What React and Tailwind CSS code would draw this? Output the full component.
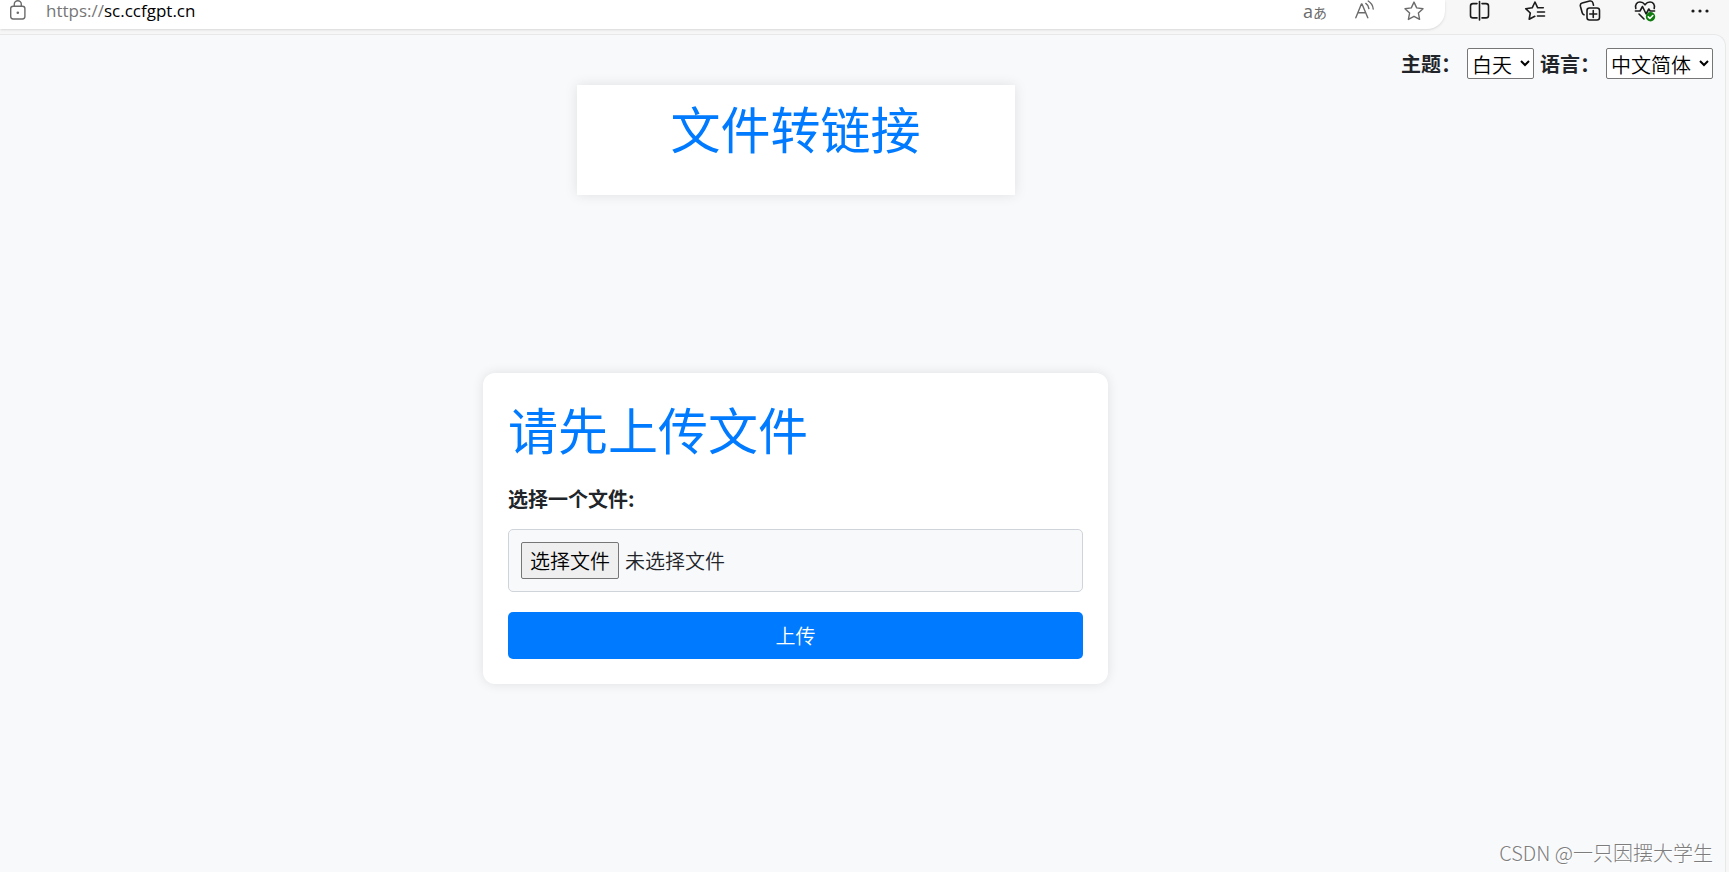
import { useRef, useState } from 'react';

const iconProps = {
  width: 22,
  height: 22,
  viewBox: '0 0 22 22',
  fill: 'none',
  stroke: 'currentColor',
  strokeWidth: 1.4,
  strokeLinecap: 'round',
  strokeLinejoin: 'round',
  'aria-hidden': true,
};

function LockIcon() {
  return (
    <svg {...iconProps}>
      <rect x="3.7" y="6.2" width="14.2" height="12.8" rx="2.4" />
      <path d="M7.3 6V4.2a3.5 3.5 0 0 1 7 0V6" />
      <circle cx="10.8" cy="12.7" r="1.3" fill="currentColor" stroke="none" />
    </svg>
  );
}

function ReadAloudIcon() {
  return (
    <svg {...iconProps}>
      <path d="M2.8 17.8 8.400 4h.6l5.800 13.800M5 12.800h7.600" />
      <path d="M12.800 3.400c1.900 1.300 2.900 3 3.100 5.200M15.200 1c3 1.800 4.700 4.400 5 8" />
    </svg>
  );
}

function StarIcon() {
  return (
    <svg {...iconProps}>
      <path d="M11 2.100l2.700 5.800 6.300.8-4.600 4.400 1.200 6.300L11 16.300l-5.600 3.100 1.200-6.300L2 8.700l6.300-.8z" />
    </svg>
  );
}

function SplitIcon() {
  return (
    <svg {...iconProps} strokeWidth={1.6}>
      <path d="M8 3.600H4a2.500 2.500 0 0 0-2.500 2.500v9.300a2.500 2.500 0 0 0 2.500 2.500h4M13 3.600h4a2.500 2.500 0 0 1 2.500 2.500v9.300a2.500 2.500 0 0 1-2.500 2.500h-4M10.500 1.500v18.500" />
    </svg>
  );
}

function FavoritesIcon() {
  return (
    <svg {...iconProps} strokeWidth={1.6}>
      <path d="M19.300 7.800h-5.600L11 2 8.200 7.800l-6.500.9 4.600 4.300-1.100 6.200 5.600-2.900M13.500 12h7M13.500 16h7" />
    </svg>
  );
}

function CollectionsIcon() {
  return (
    <svg {...iconProps} strokeWidth={1.6}>
      <rect x="8" y="8" width="12.500" height="12" rx="2.500" />
      <path d="M14.250 10.500v7M10.750 14h7M5 14.800a3 3 0 0 1-1.800-2L1.400 6.200a2.600 2.600 0 0 1 1.800-3.100l7.500-2a2.600 2.600 0 0 1 3.200 1.800l.6 2.300" />
    </svg>
  );
}

function EssentialsIcon() {
  return (
    <svg {...iconProps} strokeWidth={1.6}>
      <path d="M1.800 8.500C.8 4.500 3 2 6 2c2.200 0 3.800 1.200 5 2.800C12.200 3.200 13.800 2 16 2c3 0 5.200 2.500 4.200 6.500M1.400 11H6l2.500-4.500 3.600 7.500 2.700-5 1.300 2h4.500M5 14l5 5" />
      <circle cx="16.500" cy="16.800" r="4.700" fill="#107c10" stroke="none" />
      <path d="m14.300 16.900 1.600 1.600 2.900-3" stroke="#fff" />
    </svg>
  );
}

function MoreIcon() {
  return (
    <svg {...iconProps} stroke="none" fill="currentColor">
      <circle cx="4" cy="11" r="1.600" />
      <circle cx="11" cy="11" r="1.600" />
      <circle cx="18" cy="11" r="1.600" />
    </svg>
  );
}

const toolbar = [
  ['分屏', SplitIcon],
  ['收藏夹', FavoritesIcon],
  ['集锦', CollectionsIcon],
  ['浏览器概要', EssentialsIcon],
  ['设置及其他', MoreIcon],
];

function BrowserBar() {
  return (
    <header className="flex h-[34px] items-start">
      <div className="flex h-[29px] min-w-0 flex-1 items-center gap-[17px] rounded-br-[18px] bg-white pr-5 pb-[7px] pl-[7px] text-[#6b6b6b] shadow-sm">
        <LockIcon />
        <a
          href="https://sc.ccfgpt.cn"
          className="flex-1 font-['Open_Sans',sans-serif] text-[17px] leading-[22px] text-[#767676]"
        >
          https://<span className="text-black">sc.ccfgpt.cn</span>
        </a>
        <div className="flex items-center gap-7">
          <button type="button" aria-label="翻译" className="flex w-[22px] items-baseline leading-[22px]">
            <span className="font-['Open_Sans',sans-serif] text-[18px]">a</span>
            <span className="text-[14px]">あ</span>
          </button>
          <button type="button" aria-label="大声朗读">
            <ReadAloudIcon />
          </button>
          <button type="button" aria-label="收藏">
            <StarIcon />
          </button>
        </div>
      </div>
      <nav className="flex gap-[33px] pr-[18px] pl-6 text-[#1b1b1b]">
        {toolbar.map(([name, Icon]) => (
          <button key={name} type="button" aria-label={name}>
            <Icon />
          </button>
        ))}
      </nav>
    </header>
  );
}

export default function App() {
  const fileInput = useRef(null);
  const [fileName, setFileName] = useState('');

  return (
    <div className="flex min-h-screen flex-col bg-[#f7f7f7] font-['Noto_Sans_CJK_SC',sans-serif] text-[20px] leading-[30px] text-[#212529]">
      <BrowserBar />
      <div className="relative mr-[3px] flex flex-1 flex-col rounded-tr-[12px] border-t border-r border-[#e8e8e8] bg-[#f8f9fb]">
        <div className="flex items-center justify-end gap-[6px] pt-[13px] pr-3">
          <label htmlFor="theme" className="font-bold">
            主题：
          </label>
          <select id="theme" className="h-[31px] w-[67px] rounded-[2px] border border-[#767676] bg-white font-[350] text-black">
            <option>白天</option>
            <option>黑夜</option>
          </select>
          <label htmlFor="language" className="font-bold">
            语言：
          </label>
          <select id="language" className="h-[31px] w-[107px] rounded-[2px] border border-[#767676] bg-white font-[350] text-black">
            <option>中文简体</option>
            <option>English</option>
          </select>
        </div>

        <main className="flex flex-col items-center pt-[6px] pr-[134px]">
          <div className="w-full max-w-[438px] bg-white pt-3 pb-[38px] text-center shadow-[0_0_12px_rgba(0,0,0,0.1)]">
            <h1 className="text-[50px] leading-[60px] text-[#007bff]">文件转链接</h1>
          </div>

          <form
            className="mt-[178px] flex w-full max-w-[625px] flex-col rounded-[12px] bg-white p-[25px] shadow-[0_0_12px_rgba(0,0,0,0.1)]"
            onSubmit={(event) => event.preventDefault()}
          >
            <h2 className="text-[50px] leading-[60px] text-[#007bff]">请先上传文件</h2>
            <label htmlFor="file" className="mt-[26px] font-bold">
              选择一个文件:
            </label>
            <div className="mt-[15px] flex items-center gap-[6px] rounded-[5px] border border-[#ced4da] bg-[#f8f9fb] p-3 font-[350]">
              <input
                ref={fileInput}
                id="file"
                type="file"
                tabIndex={-1}
                className="sr-only"
                onChange={(event) => setFileName(event.target.files[0]?.name ?? '')}
              />
              <button
                type="button"
                className="h-[37px] rounded-[2px] border border-[#767676] bg-[#efefef] px-2 text-black"
                onClick={() => fileInput.current.click()}
              >
                选择文件
              </button>
              <span>{fileName || '未选择文件'}</span>
            </div>
            <button type="submit" className="mt-5 h-[47px] rounded-[5px] bg-[#007bff] font-[350] text-white">
              上传
            </button>
          </form>
        </main>

        <p className="absolute right-3 bottom-1 font-light text-[#7d7d7d] [text-shadow:1px_1px_0_#fff]">
          CSDN @一只因摆大学生
        </p>
      </div>
    </div>
  );
}
